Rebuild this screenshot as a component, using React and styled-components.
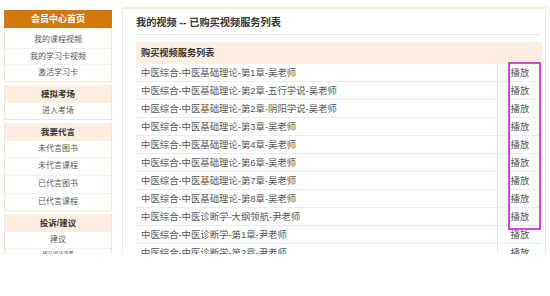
import React from 'react';
import styled, { createGlobalStyle } from 'styled-components';

const GlobalStyle = createGlobalStyle`
  body {
    margin: 0;
    background: #fff;
    font-family: "Liberation Sans", "Noto Sans CJK SC", sans-serif;
  }
`;

const Page = styled.div`
  position: relative;
  display: flex;
  align-items: flex-start;
  gap: 10px;
  height: 254px;
  padding-left: 4px;
  overflow: hidden;
`;

// Menú lateral
const Sidebar = styled.div`
  width: 108px;
  margin-top: 10px;
  flex-shrink: 0;
`;

const SideHeader = styled.div`
  height: 18px;
  line-height: 18px;
  background: #d2780f;
  color: #fff;
  font-size: 9px;
  font-weight: bold;
  text-align: center;
`;

const SideGroup = styled.div`
  border: 1px solid #f5e3d2;
  border-top: none;
  margin-bottom: 3px;
  padding-top: ${({ $first }) => ($first ? '4px' : '0')};
`;

const SideTitle = styled.div`
  height: 18px;
  line-height: 18px;
  background: #fdeee0;
  color: #333;
  font-size: 8.5px;
  font-weight: bold;
  text-align: center;
`;

const SideItem = styled.div`
  height: ${({ $h }) => $h || '15.5px'};
  line-height: ${({ $h }) => $h || '15.5px'};
  color: #555;
  font-size: 8px;
  text-align: center;
  border-bottom: 1px dotted #e6e6e6;
  &:last-child {
    border-bottom: none;
  }
`;

const SmallItem = styled(SideItem)`
  font-size: 5px;
  height: 8px;
  line-height: 8px;
`;

// Panel principal
const Main = styled.div`
  flex: 1;
  margin-top: 7px;
  margin-right: 4px;
  border: 1px solid #f3e6da;
  border-top: 2px solid #fbe9d9;
  padding: 0 3px 0 13px;
  min-height: 300px;
`;

const PageTitle = styled.div`
  height: 22px;
  line-height: 22px;
  margin-top: 3px;
  font-size: 10.2px;
  font-weight: bold;
  color: #333;
  border-bottom: 1px solid #e8e8e8;
`;

const Table = styled.div`
  margin-top: 7px;
  display: grid;
  grid-template-columns: 1fr 45px;
`;

const TableHead = styled.div`
  grid-column: 1 / -1;
  height: 22px;
  line-height: 22px;
  padding-left: 5px;
  background: #fdeee1;
  font-size: 9.2px;
  font-weight: bold;
  color: #333;
`;

const Cell = styled.div`
  height: 17px;
  line-height: 17px;
  border-bottom: 1px solid #ececec;
  font-size: 9.4px;
  color: #555;
  white-space: nowrap;
  padding-left: ${({ $play }) => ($play ? '0' : '5px')};
  text-align: ${({ $play }) => ($play ? 'center' : 'left')};
  border-left: ${({ $play }) => ($play ? '1px solid #e8e4ee' : 'none')};
`;

const Highlight = styled.div`
  position: absolute;
  left: 508px;
  top: 62px;
  width: 29px;
  height: 164px;
  border: 2px solid #dd3fdd;
`;

const videos = [
  '中医综合-中医基础理论-第1章-吴老师',
  '中医综合-中医基础理论-第2章-五行学说-吴老师',
  '中医综合-中医基础理论-第2章-阴阳学说-吴老师',
  '中医综合-中医基础理论-第3章-吴老师',
  '中医综合-中医基础理论-第4章-吴老师',
  '中医综合-中医基础理论-第6章-吴老师',
  '中医综合-中医基础理论-第7章-吴老师',
  '中医综合-中医基础理论-第8章-吴老师',
  '中医综合-中医诊断学-大纲领航-尹老师',
  '中医综合-中医诊断学-第1章-尹老师',
  '中医综合-中医诊断学-第2章-尹老师',
];

export default function App() {
  return (
    <>
      <GlobalStyle />
      <Page>
        <Sidebar>
          <SideHeader>会员中心首页</SideHeader>
          <SideGroup $first>
            <SideItem>我的课程视频</SideItem>
            <SideItem>我的学习卡视频</SideItem>
            <SideItem>激活学习卡</SideItem>
          </SideGroup>
          <SideGroup>
            <SideTitle>模拟考场</SideTitle>
            <SideItem $h="16px">进入考场</SideItem>
          </SideGroup>
          <SideGroup>
            <SideTitle>我要代言</SideTitle>
            <SideItem $h="16.7px">未代言图书</SideItem>
            <SideItem $h="16.7px">未代言课程</SideItem>
            <SideItem $h="16.7px">已代言图书</SideItem>
            <SideItem $h="16.7px">已代言课程</SideItem>
          </SideGroup>
          <SideGroup>
            <SideTitle>投诉/建议</SideTitle>
            <SideItem>建议</SideItem>
            <SmallItem>建议/投诉查看</SmallItem>
          </SideGroup>
        </Sidebar>
        <Main>
          <PageTitle>我的视频 -- 已购买视频服务列表</PageTitle>
          <Table>
            <TableHead>购买视频服务列表</TableHead>
            {videos.map((v) => (
              <React.Fragment key={v}>
                <Cell>{v}</Cell>
                <Cell $play>播放</Cell>
              </React.Fragment>
            ))}
          </Table>
        </Main>
        <Highlight />
      </Page>
    </>
  );
}
